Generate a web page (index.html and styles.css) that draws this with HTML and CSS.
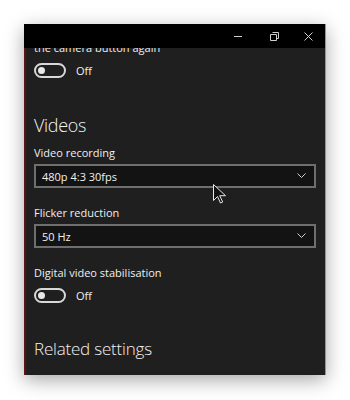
FILE: index.html
```html
<!DOCTYPE html>
<html>
<head>
<meta charset="utf-8">
<link rel="stylesheet" href="styles.css">
</head>
<body>
<div class="window">
  <div class="titlebar">
    <span class="tb-btn min">
      <svg width="9" height="9" viewBox="0 0 9 9"><path d="M0 4.5h8" stroke="#d0d0d0" stroke-width="1" fill="none"/></svg>
    </span>
    <span class="tb-btn restore">
      <svg width="9" height="9" viewBox="0 0 9 9"><path d="M2.5 0.5h6v6h-2M0.5 2.5h6v6h-6z" stroke="#d0d0d0" stroke-width="1" fill="none"/></svg>
    </span>
    <span class="tb-btn close">
      <svg width="9" height="9" viewBox="0 0 9 9"><path d="M0.5 0.5l8 8M8.5 0.5l-8 8" stroke="#d0d0d0" stroke-width="1" fill="none"/></svg>
    </span>
  </div>
  <div class="content">
    <div class="scroll">
      <div class="label cut">the camera button again</div>
      <div class="toggle-row first"><span class="toggle"><span class="knob"></span></span><span class="toggle-text">Off</span></div>
      <h2 class="heading videos">Videos</h2>
      <div class="label">Video recording</div>
      <div class="select"><span>480p 4:3 30fps</span><svg class="chev" width="9" height="6" viewBox="0 0 9 6"><path d="M0.5 0.5l4 4 4-4" stroke="#d0d0d0" stroke-width="1" fill="none"/></svg></div>
      <div class="label">Flicker reduction</div>
      <div class="select second"><span>50 Hz</span><svg class="chev" width="9" height="6" viewBox="0 0 9 6"><path d="M0.5 0.5l4 4 4-4" stroke="#d0d0d0" stroke-width="1" fill="none"/></svg></div>
      <div class="label">Digital video stabilisation</div>
      <div class="toggle-row"><span class="toggle"><span class="knob"></span></span><span class="toggle-text">Off</span></div>
      <h2 class="heading related">Related settings</h2>
    </div>
    <svg class="cursor" width="13" height="20" viewBox="0 0 13 20"><path d="M0.5 0.5v16l4-4 3 6.5 2.2-1-3-6.3h5.8z" fill="#111" stroke="#e8e8e8" stroke-width="1"/></svg>
  </div>
</div>
</body>
</html>
```
FILE: styles.css
```css
html, body {
  margin: 0;
  padding: 0;
  background: #ffffff;
}
body {
  font-family: "Open Sans", "Noto Sans", sans-serif;
  width: 350px;
  height: 400px;
  overflow: hidden;
}
.window {
  margin: 24px 0 0 24px;
  width: 301px;
  height: 351px;
  border-right: 1px solid #a77be0;
  display: flex;
  flex-direction: column;
  box-shadow: 0 5px 18px rgba(0, 0, 0, 0.35);
  background: #1f1f1f;
}
.titlebar {
  height: 24px;
  background: #000;
  display: flex;
  justify-content: flex-end;
  align-items: center;
  flex: none;
}
.tb-btn {
  width: 35px;
  height: 24px;
  display: flex;
  align-items: center;
  justify-content: center;
}
.tb-btn.restore {
  width: 36px;
}
.tb-btn.close {
  width: 33px;
}
.content {
  flex: 1;
  position: relative;
  overflow: hidden;
  border-left: 2px solid #5e1414;
  background: #1f1f1f;
}
.scroll {
  margin-top: -8px;
  padding: 0 9px 0 8px;
  color: #ffffff;
}
.label {
  font-size: 11px;
  line-height: 16px;
  color: #f0f0f0;
}
.toggle-row {
  display: flex;
  align-items: center;
  height: 16px;
  gap: 10px;
  margin-top: 6px;
}
.toggle-row.first {
  margin-top: 6px;
}
.toggle {
  box-sizing: border-box;
  width: 32px;
  height: 15px;
  border: 2px solid #d8d8d8;
  border-radius: 8px;
  display: flex;
  align-items: center;
  padding-left: 2px;
}
.knob {
  width: 7px;
  height: 7px;
  border-radius: 50%;
  background: #e8e8e8;
}
.toggle-text {
  font-size: 11px;
  color: #f0f0f0;
}
.heading {
  margin: 0;
  font-weight: 300;
  color: #f2f2f2;
}
.videos {
  font-size: 18px;
  letter-spacing: -0.3px;
  line-height: 26px;
  margin-top: 34px;
  margin-bottom: 7px;
}
.select {
  box-sizing: border-box;
  height: 24px;
  margin: 3px 0 17px;
  border: 2px solid #6e6e6e;
  background: #131313;
  display: flex;
  align-items: center;
  justify-content: space-between;
  padding: 0 8px 0 6px;
  font-size: 11px;
  color: #f0f0f0;
}
.related {
  font-size: 17px;
  letter-spacing: -0.2px;
  line-height: 24px;
  margin-top: 34px;
}
.cursor {
  position: absolute;
  left: 187px;
  top: 136px;
}
```
